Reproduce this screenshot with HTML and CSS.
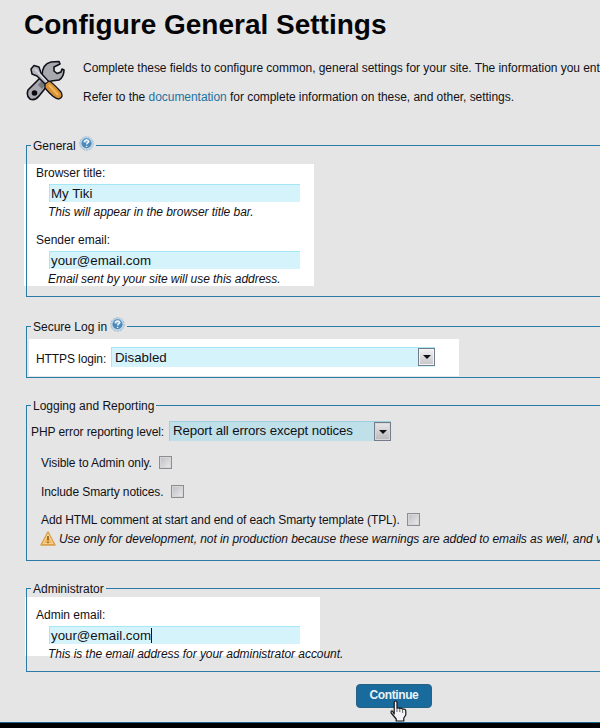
FILE: index.html
```html
<!DOCTYPE html>
<html lang="en">
<head>
<meta charset="utf-8">
<title>Configure General Settings</title>
<link rel="stylesheet" href="styles.css">
</head>
<body>
<svg class="defs" width="0" height="0" aria-hidden="true">
  <defs>
    <linearGradient id="warn" x1="0" y1="0" x2="0" y2="1"><stop offset="0" stop-color="#f6d27c"/><stop offset="1" stop-color="#eda94e"/></linearGradient>
    <symbol id="help" viewBox="0 0 15 15">
      <circle cx="7.5" cy="7.5" r="6.8" fill="#c3d6e5" stroke="#9bbdd5" stroke-dasharray="2 1"/>
      <circle cx="7.5" cy="7.3" r="5" fill="#4c89b8"/>
      <path d="M3.5 6a4.3 4.3 0 0 1 8 0q-4 2-8 0" fill="#8db7d7"/>
      <path d="M5.6 6q.1-2 2-2t2 1.6c0 1.3-1.9 1.3-1.9 3M7.6 9.7v1.4" fill="none" stroke="#f1f7fb" stroke-width="1.4"/>
    </symbol>
  </defs>
</svg>
<main class="page">
  <h1 class="title"><span>Configure General Settings</span></h1>
  <section class="intro">
    <svg class="tools" viewBox="0 0 40 42" width="40" height="42">
      <g stroke="#10101c" stroke-linejoin="round">
        <path d="M2 30L16 16Q16 4 25 2L33 1.5 34 4 28 7 28 11 31 13.5 35 12 36 9 38 10Q38 17 33 20L25 21 13 36Q9 41 4 39 0 36 2 30Z" fill="#a8a9ae" stroke-width="1.6"/>
        <path d="M12 25L18 18 22 22 16 29Z" fill="#77787c" stroke="none"/>
        <path d="M5 9L8 5.5 13 7 15 13 23 22 20 25 11 16 6 14Z" fill="#b5b6ba" stroke-width="1.5"/>
        <path d="M19 24L23 21Q26 22 35 32 38 37 33 39 28 39 19 28Z" fill="#d89336" stroke-width="1.3"/>
      </g>
      <path d="M9 9L21 22" stroke="#dddde0" stroke-width="1.3"/>
      <path d="M23 25L32 35" stroke="#f2b65a" stroke-width="2"/>
      <circle cx="8.5" cy="33" r="2.8" fill="#08080f"/>
    </svg>
    <div class="intro-text">
      <p class="lead">Complete these fields to configure common, general settings for your site. The information you ent</p>
      <p class="refer">Refer to the <a>documentation</a> for complete information on these, and other, settings.</p>
    </div>
  </section>

  <section class="group general">
    <h2 class="legend"><span>General</span><svg class="help" width="15" height="15"><use href="#help"/></svg></h2>
    <div class="panel">
      <div class="label">Browser title:</div>
      <div class="input">My Tiki</div>
      <div class="hint">This will appear in the browser title bar.</div>
      <div class="label second">Sender email:</div>
      <div class="input">your@email.com</div>
      <div class="hint">Email sent by your site will use this address.</div>
    </div>
  </section>

  <section class="group secure">
    <h2 class="legend"><span>Secure Log in</span><svg class="help" width="15" height="15"><use href="#help"/></svg></h2>
    <div class="panel">
      <span class="https">HTTPS login:</span>
      <div class="select"><span>Disabled</span><i class="arrow"></i></div>
    </div>
  </section>

  <section class="group logging">
    <h2 class="legend"><span>Logging and Reporting</span></h2>
    <div class="level">
      <span class="php">PHP error reporting level:</span>
      <div class="select dark"><span>Report all errors except notices</span><i class="arrow"></i></div>
    </div>
    <div class="check"><span class="c1">Visible to Admin only.</span><i class="box"></i></div>
    <div class="check"><span class="c2">Include Smarty notices.</span><i class="box"></i></div>
    <div class="check"><span class="c3">Add HTML comment at start and end of each Smarty template (TPL).</span><i class="box"></i></div>
    <div class="warning">
      <svg width="16" height="15" viewBox="0 0 16 15"><path d="M8 1L15 14H1Z" fill="url(#warn)" stroke="#d7a04b" stroke-width="1.5" stroke-linejoin="round"/><path d="M8 3.5L12.8 12.4H3.2Z" fill="none" stroke="#fae4b0" stroke-width=".8"/><path d="M8 5v4.5M8 10.7v1.5" stroke="#9a621e" stroke-width="1.7"/></svg>
      <span>Use only for development, not in production because these warnings are added to emails as well, and v</span>
    </div>
  </section>

  <section class="group admin">
    <h2 class="legend"><span>Administrator</span></h2>
    <div class="panel">
      <div class="label">Admin email:</div>
      <div class="input"><span>your@email.com</span><i class="caret"></i></div>
      <div class="hint">This is the email address for your administrator account.</div>
    </div>
  </section>

  <div class="actions">
    <div class="button">Continue
      <svg class="pointer" width="17" height="22" viewBox="0 0 17 22"><path d="M4.2 14V2.4Q4.2 1 5.6 1T7 2.4V8.2Q8.5 7.2 9.8 8.5 11.4 7.7 12.5 9.2 15.5 8.5 15.8 11V15L13.8 18V21H6.2V19L1.2 13Q.5 10.5 2.4 11Z" fill="#f3f3f5" stroke="#15151c" stroke-width="1.2" stroke-linejoin="round"/><path d="M7 8v4M9.8 9v3M12.6 10v3" stroke="#55555c" stroke-width=".9"/></svg>
    </div>
  </div>
  <footer class="footer"></footer>
</main>
</body>
</html>
```
FILE: styles.css
```css
* { box-sizing: border-box; }
html { background: #e5e5e5; }
body { margin: 0; overflow: hidden; font: 12px/16px "Liberation Sans", Arial, sans-serif; color: #111118; }
h1, h2, p { margin: 0; }
i { display: block; }
svg { display: block; flex: none; }
.defs { position: absolute; }
.page { width: 600px; height: 728px; overflow: hidden; display: flex; flex-direction: column; white-space: nowrap; }
.title { height: 60px; flex: none; padding: 8px 0 0 24px; font-size: 28px; line-height: 34px; color: #050508; }
.intro { display: flex; height: 85px; flex: none; padding-left: 26px; }
.intro-text { padding-left: 17px; letter-spacing: -0.04px; }
.lead { margin-bottom: 13px; }
.intro a { color: #1f72a2; }

.group { width: 590px; flex: none; margin-left: 26px; border: 1px solid #2b7ba8; border-right: 0; display: flex; flex-direction: column; align-items: flex-start; }
.legend { display: flex; align-items: center; height: 18px; margin: -9px 0 0 4px; padding: 0 2px; background: #e5e5e5; font-size: 12px; line-height: 18px; font-weight: normal; flex: none; }
.legend .help { margin: -6px 0 0 3px; }
.panel { position: relative; z-index: -1; background: #fff; flex: none; }

.general { height: 152px; margin-bottom: 29px; }
.general .panel { width: 290px; height: 122px; margin: 9px 0 0 -3px; padding: 1px 0 0 12px; }
.label { height: 16px; }
.label.second { margin-top: 12px; }
.input { display: flex; width: 251px; height: 18px; margin: 3px 0 2px 13px; padding-left: 1px; background: #d5f3fa; border-top: 1px solid #a5e7f5; border-left: 1px solid #a5e7f5; font-size: 13.3px; line-height: 18px; }
.hint { height: 16px; margin-left: 12px; font-style: italic; letter-spacing: -0.05px; }

.secure { height: 52px; margin-bottom: 27px; }
.secure .panel { display: flex; width: 430px; height: 37px; margin: 3px 0 0 2px; padding: 8px 0 0 7px; }
.https { width: 75px; padding-top: 4px; letter-spacing: -0.1px; }
.select { display: flex; justify-content: space-between; width: 324px; height: 20px; padding: 0 0 0 3px; background: #d5f3fa; border-top: 1px solid #a5e7f5; border-left: 1px solid #a5e7f5; font-size: 13.3px; line-height: 20px; }
.arrow { width: 17px; height: 18px; border: 1px solid #737b89; box-shadow: inset 0 0 0 1px #f4f4f4; background: linear-gradient(#f3f3f3, #c4c4ca); display: flex; align-items: center; justify-content: center; }
.arrow::before { content: ""; border: 4px solid transparent; border-top-color: #111118; border-bottom: 0; }

.logging { height: 156px; margin-bottom: 27px; }
.level { display: flex; height: 34px; margin: 6px 0 0 4px; }
.php { width: 138px; padding-top: 3px; letter-spacing: -0.08px; }
.select.dark { width: 222px; background: #bfdfe9; border-color: #9bd0e0; line-height: 18px; letter-spacing: -0.13px; }
.dark .arrow { height: 19px; background: linear-gradient(#e8e8e8, #b9b9be); box-shadow: inset 0 0 0 1px #d8d8d8; }
.check { display: flex; height: 28.6px; padding-left: 14px; letter-spacing: -0.1px; }
.box { width: 13px; height: 13px; margin-top: 1px; border: 1px solid #8d8d92; box-shadow: inset 0 0 0 1px #d6d6d8; background: linear-gradient(135deg, #bdbdc3, #ececec); }
.c1 { width: 118px; }
.c2 { width: 130px; }
.c3 { width: 366px; letter-spacing: -0.12px; }
.warning { display: flex; gap: 3px; margin: -10px 0 0 13px; font-style: italic; letter-spacing: -0.06px; }

.admin { height: 84px; margin-bottom: 12px; }
.admin .legend { height: 17px; }
.admin .panel { width: 295px; height: 59px; margin: 0 0 0 -2px; padding: 10px 0 0 11px; }
.caret { width: 1px; height: 15px; margin-top: 1px; background: #111118; }

.actions { height: 38px; flex: none; padding-left: 356px; }
.button { position: relative; width: 76px; height: 24px; border-radius: 4px; background: #186b9c; border: 1px solid #276184; color: #edf2f5; font-weight: bold; line-height: 21px; text-align: center; letter-spacing: -0.4px; }
.pointer { position: absolute; left: 33px; top: 15px; }
.footer { height: 7px; flex: none; background: #000; border-top: 1px solid #1d668f; }
```
